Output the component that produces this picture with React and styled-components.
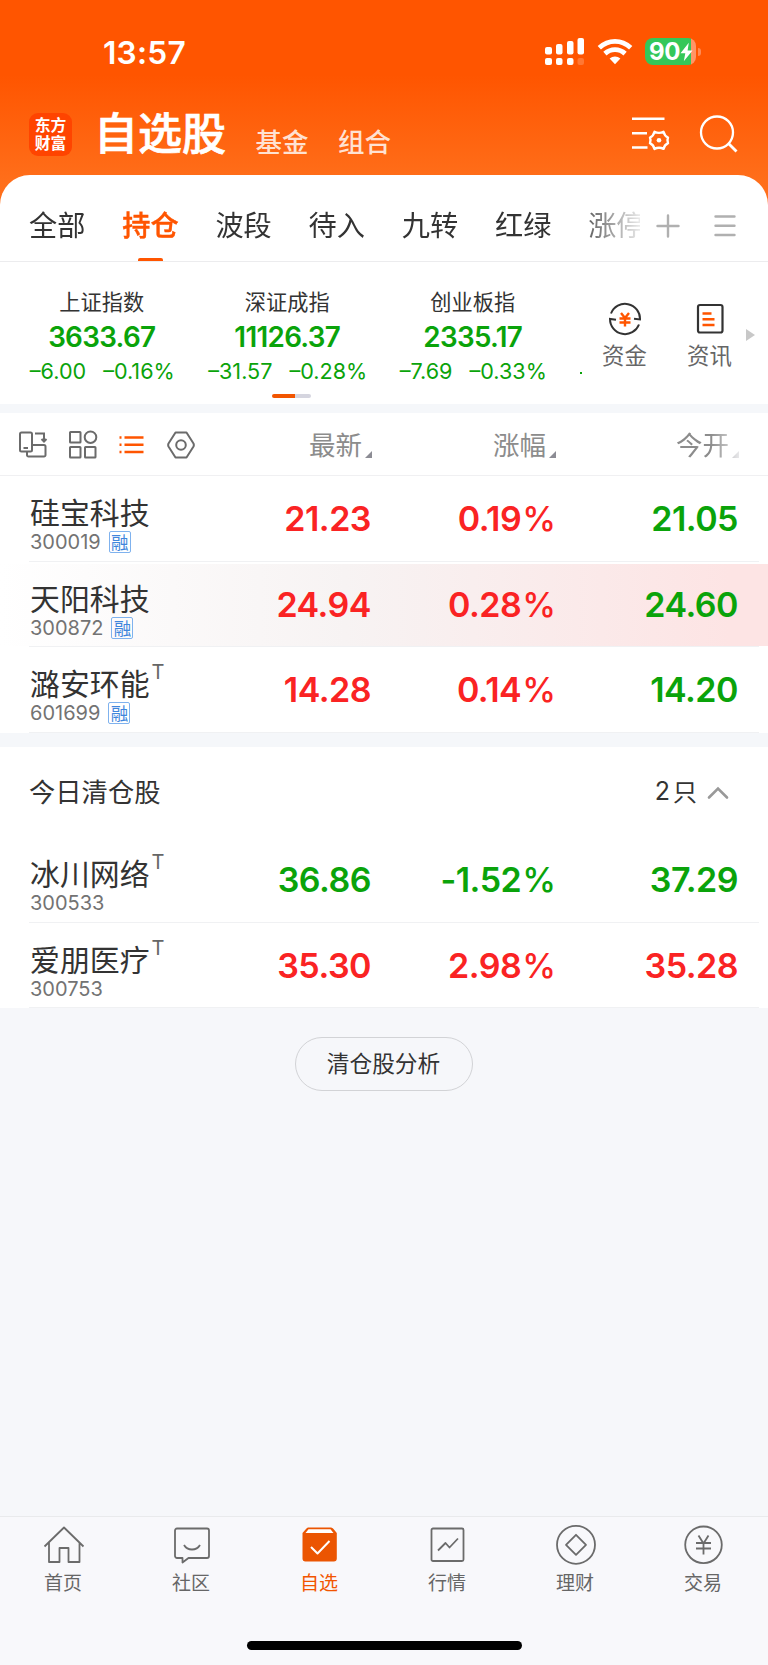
import React, { useState } from "react";
import styled, { createGlobalStyle, css } from "styled-components";

const RED = "#fa2323";
const GREEN = "#0aa30a";
const ORANGE = "#ff5500";

const tabs = ["全部", "持仓", "波段", "待入", "九转", "红绿", "涨停"];

const indices = [
  { name: "上证指数", value: "3633.67", change: "–6.00", percent: "–0.16%" },
  { name: "深证成指", value: "11126.37", change: "–31.57", percent: "–0.28%" },
  { name: "创业板指", value: "2335.17", change: "–7.69", percent: "–0.33%" },
];

const holdings = [
  { name: "硅宝科技", code: "300019", margin: true, price: "21.23", rate: "0.19", open: "21.05", up: true, openUp: false },
  { name: "天阳科技", code: "300872", margin: true, price: "24.94", rate: "0.28", open: "24.60", up: true, openUp: false, flash: true },
  { name: "潞安环能", code: "601699", margin: true, t: true, price: "14.28", rate: "0.14", open: "14.20", up: true, openUp: false },
];

const cleared = [
  { name: "冰川网络", code: "300533", t: true, price: "36.86", rate: "-1.52", open: "37.29", up: false, openUp: false },
  { name: "爱朋医疗", code: "300753", t: true, price: "35.30", rate: "2.98", open: "35.28", up: true, openUp: true },
];

const HomeIcon = () => (
  <svg width="42" height="42" viewBox="0 0 42 42">
    <path d="M1.500 22.500 21 3.500 40.500 22.500M6 18.500V38H16.500V24H25.500V38H36.500V18.500" />
  </svg>
);

const CommunityIcon = () => (
  <svg width="42" height="42" viewBox="0 0 42 42">
    <path d="M6 4.500H36a2 2 0 0 1 2 2V32a2 2 0 0 1-2 2H17.500l-6 4.500V34H6a2 2 0 0 1-2-2V6.500a2 2 0 0 1 2-2Z" />
    <path d="M13 21c3.500 6 12.500 6 16 0" />
  </svg>
);

const WatchlistIcon = () => (
  <svg width="42" height="42" viewBox="0 0 42 42">
    <path d="M9 3.500H32Q33.500 3.500 34.500 5L37.800 9V34.500a3 3 0 0 1-3 3H6.500a3 3 0 0 1-3-3V9L7 5Q8 3.500 9 3.500Z" fill="#eb5502" stroke="none" />
    <path d="M9.500 5.300H31.500L34.500 9H6.500Z" fill="#fff" stroke="none" />
    <path d="M12 23 18.500 29.500 30.500 17" stroke="#fff" strokeWidth="2" />
  </svg>
);

const MarketIcon = () => (
  <svg width="42" height="42" viewBox="0 0 42 42">
    <rect x="4.500" y="4.500" width="32" height="32.500" rx="1.500" />
    <path d="m11 26.500 7.500-7.500 4 4.500L31 14.500" />
  </svg>
);

const WealthIcon = () => (
  <svg width="42" height="42" viewBox="0 0 42 42">
    <circle cx="21" cy="20.800" r="19" />
    <path d="m21 10.800 10 10-10 10-10-10Z" />
  </svg>
);

const TradeIcon = () => (
  <svg width="42" height="42" viewBox="0 0 42 42">
    <circle cx="20.500" cy="20.800" r="18.300" />
    <path d="m15.500 11.500 5 8 5-8M20.500 19.500V30.500M13 19H28M13 24.500H28" />
  </svg>
);

const navItems = [
  { label: "首页", Icon: HomeIcon },
  { label: "社区", Icon: CommunityIcon },
  { label: "自选", Icon: WatchlistIcon },
  { label: "行情", Icon: MarketIcon },
  { label: "理财", Icon: WealthIcon },
  { label: "交易", Icon: TradeIcon },
];

function StatusIcons() {
  return (
    <StatusGroup>
      <svg width="40" height="28" viewBox="0 0 40 28" fill="#fff">
        <rect x="0" y="9" width="7" height="7.500" rx="2" />
        <rect x="11" y="6" width="6.500" height="10.500" rx="2" />
        <rect x="22" y="3" width="6.500" height="13.500" rx="2" />
        <rect x="32.500" y="0" width="6.500" height="16.500" rx="2" />
        <rect x="0" y="20" width="7" height="7" rx="2" />
        <rect x="11" y="20" width="6.500" height="7" rx="2" />
        <rect x="22" y="20" width="6.500" height="7" rx="2" />
        <rect x="32.500" y="20" width="6.500" height="7" rx="2" opacity="0.2" />
      </svg>
      <svg width="36" height="28" viewBox="0 0 36 28" fill="none" stroke="#fff" strokeWidth="4.800">
        <path d="M2.300 9.700C11.500 1.200 24.500 1.200 33.700 9.700" />
        <path d="M7.900 15.600C13.800 10.300 22.200 10.300 28.100 15.600" />
        <path d="M18 26.200 12.600 20.600C15.800 17.800 20.200 17.800 23.400 20.600Z" fill="#fff" stroke="none" />
      </svg>
      <Battery>
        <BatteryBody>
          90
          <svg width="13" height="20" viewBox="0 0 13 20" fill="#fff">
            <path d="M8.800.800.500 11.300H5.300L3.800 19.200 12.500 8.500H7.600Z" />
          </svg>
        </BatteryBody>
        <BatteryCap />
      </Battery>
    </StatusGroup>
  );
}

function StockRow({ stock }) {
  return (
    <Row $flash={stock.flash}>
      <Identity>
        <StockName>
          {stock.name}
          {stock.t && <TMark>T</TMark>}
        </StockName>
        <StockCode>
          {stock.code}
          {stock.margin && <MarginTag>融</MarginTag>}
        </StockCode>
      </Identity>
      <Figure $up={stock.up}>{stock.price}</Figure>
      <Figure $up={stock.up}>
        {stock.rate}
        <small>%</small>
      </Figure>
      <Figure $up={stock.openUp}>{stock.open}</Figure>
    </Row>
  );
}

export default function App() {
  const [activeTab, setActiveTab] = useState("持仓");
  const [activeNav, setActiveNav] = useState("自选");
  const [expanded, setExpanded] = useState(true);

  return (
    <>
      <GlobalStyle />
      <Screen>
        <StatusBar>
          <Clock>13:57</Clock>
          <StatusIcons />
        </StatusBar>
        <TitleBar>
          <Logo>
            东方
            <br />
            财富
          </Logo>
          <Title>自选股</Title>
          <SubTitle>基金</SubTitle>
          <SubTitle>组合</SubTitle>
          <TitleActions>
            <svg width="39" height="38" viewBox="0 0 39 38" fill="none" stroke="#fff" strokeWidth="2.400">
              <path d="M1 4.700H33.500M1 19.200H16M1 33.500H16.500" />
              <path
                d="M23.500 17.700Q28 20 32.500 17.700Q33.500 21.800 37 23.500Q35.800 26.300 37 29.100Q33.500 30.800 32.500 34.900Q28 32.600 23.500 34.900Q22.500 30.800 19 29.100Q20.200 26.300 19 23.500Q22.500 21.800 23.500 17.700Z"
                strokeLinejoin="round"
              />
              <circle cx="28" cy="26.300" r="2.300" fill="#fff" stroke="none" />
            </svg>
            <svg width="39" height="39" viewBox="0 0 39 39" fill="none" stroke="#fff" strokeWidth="2.300">
              <circle cx="18" cy="18.500" r="16" />
              <path d="m29.500 29.500 8 8" strokeWidth="2.800" />
            </svg>
          </TitleActions>
        </TitleBar>

        <Sheet>
          <TabBar>
            <TabList>
              {tabs.map((tab) => (
                <Tab key={tab} $active={tab === activeTab} onClick={() => setActiveTab(tab)}>
                  {tab}
                </Tab>
              ))}
            </TabList>
            <TabTools>
              <svg width="24" height="24" viewBox="0 0 24 24" stroke="#b0b0b0" strokeWidth="2.400" strokeLinecap="round">
                <path d="M1.500 12H22.500M12 1.500V22.500" />
              </svg>
              <svg width="24" height="24" viewBox="0 0 24 24" stroke="#b0b0b0" strokeWidth="2.400" strokeLinecap="round">
                <path d="M2.500 2.500H21.500M2.500 11.800H21.500M2.500 21H21.500" />
              </svg>
            </TabTools>
          </TabBar>

          <IndexStrip>
            <IndexList>
              {indices.map((item) => (
                <IndexItem key={item.name}>
                  <IndexName>{item.name}</IndexName>
                  <IndexValue>{item.value}</IndexValue>
                  <IndexChange>
                    <span>{item.change}</span>
                    <span>{item.percent}</span>
                  </IndexChange>
                </IndexItem>
              ))}
              <IndexPeek />
            </IndexList>
            <Shortcut>
              <svg width="34" height="34" viewBox="0 0 34 34" fill="none" stroke="#333" strokeWidth="2">
                <path d="M3 11.500A15 15 0 0 1 32 17.500L26 16.800" />
                <path d="M31 22.500A15 15 0 0 1 2 17L8 17.800" />
                <path d="m13 11 4 5 4-5M11.500 16.500H22.500M11.500 20.500H22.500M17 16V24.500" stroke={ORANGE} strokeWidth="2.400" />
              </svg>
              资金
            </Shortcut>
            <Shortcut>
              <svg width="34" height="34" viewBox="0 0 34 34" fill="none" stroke="#333" strokeWidth="2.200">
                <rect x="5" y="3" width="24.500" height="27.500" rx="2" />
                <path d="M9.500 11.500H18.500M9.500 17.300H21.500M9.500 23H21.500" stroke={ORANGE} strokeWidth="2.600" />
              </svg>
              资讯
            </Shortcut>
            <MoreArrow />
            <Pager />
          </IndexStrip>

          <ListHeader>
            <ViewModes>
              <svg width="30" height="30" viewBox="0 0 30 30">
                <rect x="2" y="2.500" width="12" height="19" rx="1.500" />
                <path d="M5.500 18H10M9 22V25a1.500 1.500 0 0 0 1.500 1.500H26a1.500 1.500 0 0 0 1.500-1.500V16.500A1.500 1.500 0 0 0 26 15H14M17 3.500H26V11M23.500 9 26 11.500 28.500 9" />
              </svg>
              <svg width="30" height="30" viewBox="0 0 30 30">
                <rect x="2" y="2" width="10.500" height="10.500" rx=".6" />
                <circle cx="22.500" cy="7.200" r="5.800" />
                <rect x="2" y="17" width="10.500" height="10.500" rx=".6" />
                <rect x="17" y="17" width="10.500" height="10.500" rx=".6" />
              </svg>
              <ListModeIcon width="30" height="30" viewBox="0 0 30 30">
                <path d="M7.500 7.500H26.500M7.500 14.700H26.500M7.500 22H26.500" />
                <path d="M2.500 7.500H4.500M2.500 14.700H4.500M2.500 22H4.500" />
              </ListModeIcon>
              <svg width="30" height="30" viewBox="0 0 30 30">
                <path d="M8.500 2.500H19.500L26.500 13.500Q27.200 15 26.500 16.500L19.500 27.500H8.500L1.500 16.500Q.8 15 1.500 13.500Z" strokeLinejoin="round" />
                <circle cx="14" cy="15" r="4.800" />
              </svg>
            </ViewModes>
            <ColumnTitle>最新</ColumnTitle>
            <ColumnTitle>涨幅</ColumnTitle>
            <ColumnTitle $faded>今开</ColumnTitle>
          </ListHeader>

          {holdings.map((stock) => (
            <StockRow key={stock.code} stock={stock} />
          ))}

          <Divider />
          <SectionHeader onClick={() => setExpanded(!expanded)}>
            <span>今日清仓股</span>
            <Count>
              <b>2</b>只
              <svg width="22" height="14" viewBox="0 0 22 14" fill="none" stroke="#999" strokeWidth="2.600" strokeLinecap="round">
                <path d="M2 11.500 11 2.500 20 11.500" />
              </svg>
            </Count>
          </SectionHeader>
          {expanded && cleared.map((stock) => <StockRow key={stock.code} stock={stock} />)}
        </Sheet>

        <Empty>
          <AnalyzeButton>清仓股分析</AnalyzeButton>
        </Empty>

        <BottomBar>
          <Nav>
            {navItems.map(({ label, Icon }) => (
              <NavItem key={label} $active={label === activeNav} onClick={() => setActiveNav(label)}>
                <Icon />
                <span>{label}</span>
              </NavItem>
            ))}
          </Nav>
          <HomeIndicator />
        </BottomBar>
      </Screen>
    </>
  );
}

const GlobalStyle = createGlobalStyle`
  * {
    box-sizing: border-box;
  }
  body {
    margin: 0;
    font-family: "Noto Sans CJK SC", sans-serif;
    color: #333;
  }
  svg {
    display: block;
    flex-shrink: 0;
  }
`;

const numeric = css`
  font-family: Inter, "Noto Sans CJK SC", sans-serif;
`;

const Screen = styled.div`
  width: 768px;
  height: 1665px;
  display: flex;
  flex-direction: column;
  overflow: hidden;
  background: linear-gradient(#ff5500 75px, #ff6e1a 180px, #ff701c 210px, #f6f7fa 210px);
`;

const StatusBar = styled.div`
  height: 104px;
  flex-shrink: 0;
  display: flex;
  justify-content: space-between;
  padding: 0 67px 0 103px;
`;

const Clock = styled.div`
  ${numeric}
  margin-top: 33px;
  font-size: 31.700px;
  line-height: 40px;
  font-weight: 600;
  letter-spacing: 0.2px;
  color: #fff;
`;

const StatusGroup = styled.div`
  display: flex;
  padding-top: 38px;
  gap: 12px;
`;

const Battery = styled.div`
  display: flex;
  gap: 2px;
`;

const BatteryBody = styled.div`
  ${numeric}
  display: flex;
  align-items: center;
  width: 51px;
  height: 27px;
  padding: 0 0 0 4px;
  border-radius: 8px;
  background: linear-gradient(90deg, #34c759 46px, #ff9566 46px);
  color: #fff;
  font-size: 24px;
  font-weight: 700;
  letter-spacing: -0.3px;
`;

const BatteryCap = styled.div`
  width: 3px;
  height: 8px;
  margin-top: 10px;
  border-radius: 0 3px 3px 0;
  background: #ff8a55;
`;

const TitleBar = styled.div`
  height: 71px;
  flex-shrink: 0;
  display: flex;
  padding-left: 29px;
  color: #fff;
`;

const Logo = styled.div`
  width: 43px;
  height: 43px;
  margin-top: 9px;
  padding-top: 3px;
  border-radius: 9px;
  background: #ff4400;
  font-size: 15.800px;
  line-height: 18px;
  font-weight: 700;
  text-align: center;
`;

const Title = styled.h1`
  margin: -2px 0 0 22px;
  font-size: 44px;
  line-height: 58px;
  font-weight: 500;
  -webkit-text-stroke: 0.7px #fff;
`;

const SubTitle = styled.div`
  margin: 15px 0 0 29.500px;
  font-size: 26.500px;
  line-height: 44px;
  color: rgba(255, 255, 255, 0.82);
  font-weight: 500;
`;

const TitleActions = styled.div`
  display: flex;
  gap: 29px;
  margin: 10px 30px 0 auto;
`;

const Sheet = styled.main`
  border-radius: 30px 30px 0 0;
  background: #fff;
  flex-shrink: 0;
`;

const TabBar = styled.div`
  height: 87px;
  display: flex;
  justify-content: space-between;
  border-bottom: 1px solid #ececee;
`;

const TabList = styled.div`
  width: 640px;
  display: flex;
  gap: 36.800px;
  padding-left: 29px;
  overflow: hidden;
  mask-image: linear-gradient(90deg, #000 570px, rgba(0, 0, 0, 0.1) 640px);
`;

const Tab = styled.div`
  flex-shrink: 0;
  display: flex;
  flex-direction: column;
  align-items: center;
  height: 87px;
  padding-top: 29px;
  font-size: 28.200px;
  line-height: 40px;
  cursor: pointer;
  color: ${(props) => (props.$active ? ORANGE : "#333")};
  font-weight: ${(props) => (props.$active ? 500 : 400)};
  ${(props) => props.$active && `-webkit-text-stroke: 0.4px ${ORANGE};`}

  &::after {
    content: "";
    width: 25px;
    height: 4px;
    margin-top: auto;
    border-radius: 2px 2px 0 0;
    background: ${(props) => (props.$active ? ORANGE : "transparent")};
  }
`;

const TabTools = styled.div`
  display: flex;
  gap: 33px;
  padding: 39px 31px 0 0;
`;

const IndexStrip = styled.div`
  position: relative;
  height: 142px;
  display: flex;
`;

const IndexList = styled.div`
  display: flex;
  width: 582px;
  padding-left: 9px;
  overflow: hidden;
`;

const IndexItem = styled.div`
  width: 185.500px;
  flex-shrink: 0;
  display: flex;
  flex-direction: column;
  align-items: center;
  padding-top: 24px;
`;

const IndexName = styled.div`
  font-size: 21.200px;
  line-height: 30px;
`;

const IndexValue = styled.div`
  ${numeric}
  margin-top: 4px;
  font-size: 27.800px;
  line-height: 34px;
  font-weight: 600;
  letter-spacing: -0.7px;
  color: ${GREEN};
`;

const IndexChange = styled.div`
  ${numeric}
  display: flex;
  gap: 17px;
  margin: 3px 0 0 1px;
  font-size: 21.600px;
  line-height: 28px;
  color: ${GREEN};
  white-space: nowrap;
`;

/* leading edge of the next, scrolled-out index */
const IndexPeek = styled.div`
  flex-shrink: 0;
  width: 2px;
  height: 2px;
  margin: 110px 0 0 14px;
  background: ${GREEN};
`;

const Shortcut = styled.div`
  width: 85px;
  display: flex;
  flex-direction: column;
  align-items: center;
  padding-top: 40px;
  font-size: 22.400px;
  line-height: 32px;
  color: #666;

  svg {
    margin-bottom: 2px;
  }
`;

const MoreArrow = styled.div`
  width: 0;
  height: 0;
  margin: 67px 0 0 -6px;
  border-left: 9px solid #c8c8c8;
  border-top: 6px solid transparent;
  border-bottom: 6px solid transparent;
`;

const Pager = styled.div`
  position: absolute;
  left: 272px;
  bottom: 6px;
  width: 39px;
  height: 4px;
  border-radius: 2px;
  background: linear-gradient(90deg, #f25500 23px, #d5d5df 23px);
`;

const ListHeader = styled.div`
  height: 72px;
  display: grid;
  grid-template-columns: 195px 177px 184px 183px;
  border-top: 9px solid #f5f7fa;
  border-bottom: 1px solid #f0f0f2;
`;

const ViewModes = styled.div`
  display: flex;
  gap: 19.500px;
  padding: 17px 0 0 18px;

  svg {
    fill: none;
    stroke: #6b6b6b;
    stroke-width: 2;
  }
`;

const ListModeIcon = styled.svg`
  && {
    stroke: ${ORANGE};
    stroke-width: 2.5;
  }
`;

const ColumnTitle = styled.div`
  display: flex;
  justify-content: flex-end;
  padding-top: 11px;
  font-size: 26.500px;
  line-height: 40px;
  color: #8c8c8c;
  ${(props) => props.$faded && "mask-image: linear-gradient(90deg, #000 155px, rgba(0, 0, 0, 0.2) 183px);"}

  &::after {
    content: "";
    margin: 27px 0 0 3px;
    height: 0;
    border-left: 7px solid transparent;
    border-bottom: 7px solid #8c8c94;
  }
`;

const Row = styled.div`
  position: relative;
  height: 85.670px;
  display: grid;
  grid-template-columns: 195px 176px 184px 183px;
  ${(props) =>
    props.$flash &&
    css`
      background: linear-gradient(90deg, #fff 0, #f7f3f3 45%, #fde4e4 95%) 0 2px / 100% 82px no-repeat;
    `}

  &::after {
    content: "";
    position: absolute;
    left: 29px;
    right: 9px;
    bottom: 0;
    height: 1px;
    background: #f0f1f3;
  }
`;

const Identity = styled.div`
  padding: 19px 0 0 30px;
`;

const StockName = styled.div`
  display: flex;
  font-size: 29.900px;
  line-height: 32px;
  white-space: nowrap;
`;

const TMark = styled.sup`
  ${numeric}
  margin: -9px 0 0 2px;
  font-size: 20px;
  line-height: 30px;
  color: #666;
`;

const StockCode = styled.div`
  ${numeric}
  display: flex;
  align-items: center;
  gap: 8px;
  height: 22px;
  margin-top: 4px;
  font-size: 20px;
  color: #737373;
`;

const MarginTag = styled.span`
  display: flex;
  align-items: center;
  justify-content: center;
  width: 22px;
  height: 22px;
  border: 1px solid #7fb2ee;
  border-radius: 2px;
  font-family: "Noto Sans CJK SC", sans-serif;
  font-size: 17.500px;
  line-height: 16px;
  color: #3f86dc;
`;

const Figure = styled.div`
  ${numeric}
  padding-top: 21px;
  text-align: right;
  font-size: 34px;
  line-height: 44px;
  font-weight: 600;
  letter-spacing: -0.5px;
  color: ${(props) => (props.$up ? RED : GREEN)};

  small {
    font-size: 34px;
    font-weight: 500;
    margin: 0 -0.5px 0 1px;
  }
`;

const Divider = styled.div`
  height: 14px;
  background: #f5f7fa;
`;

const SectionHeader = styled.div`
  height: 90px;
  display: flex;
  justify-content: space-between;
  padding: 24px 39px 0 29px;
  font-size: 26.300px;
  line-height: 40px;
`;

const Count = styled.div`
  display: flex;
  font-size: 24px;

  b {
    ${numeric}
    margin-right: 3px;
    font-size: 25px;
    font-weight: 400;
  }
  svg {
    margin: 15px 0 0 10px;
  }
`;

const Empty = styled.div`
  flex: 1;
  display: flex;
  justify-content: center;
  align-items: flex-start;
  padding-top: 29px;
  background: #f6f7fa;
`;

const AnalyzeButton = styled.button`
  width: 178px;
  height: 54px;
  padding: 0 1px 3px 0;
  border: 1px solid #d2d3d6;
  border-radius: 27px;
  background: transparent;
  font-family: inherit;
  font-size: 22.700px;
  color: #333;
`;

const BottomBar = styled.footer`
  height: 149px;
  flex-shrink: 0;
  display: flex;
  flex-direction: column;
  align-items: center;
  border-top: 1px solid #e9eaec;
  background: #f8f8fb;
`;

const Nav = styled.nav`
  width: 100%;
  display: grid;
  grid-template-columns: repeat(6, 1fr);
`;

const NavItem = styled.div`
  display: flex;
  flex-direction: column;
  align-items: center;
  padding-top: 7px;
  font-size: 19px;
  line-height: 32px;
  cursor: pointer;
  color: ${(props) => (props.$active ? "#f25500" : "#666")};

  svg {
    fill: none;
    stroke: #6b6b6b;
    stroke-width: 1.8;
    stroke-linejoin: round;
  }
  span {
    margin-right: 2px;
  }
`;

const HomeIndicator = styled.div`
  width: 275px;
  height: 9px;
  margin-top: 43px;
  border-radius: 5px;
  background: #000;
`;
